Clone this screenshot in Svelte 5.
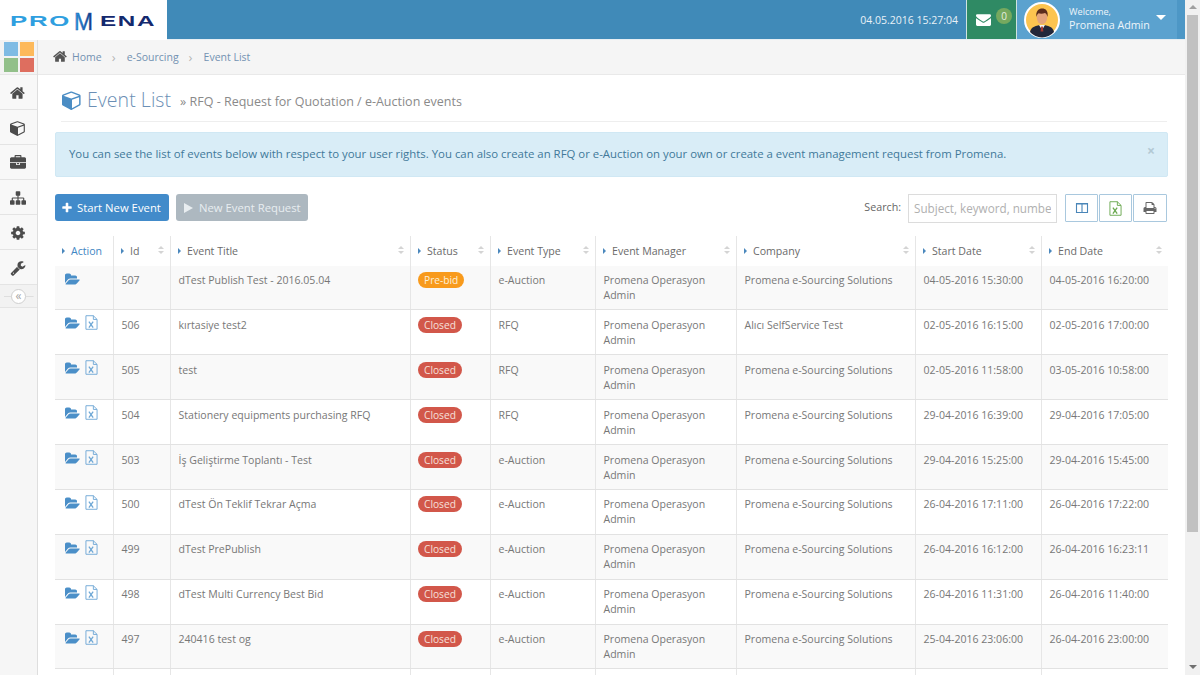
<script>
  const P = {
    home: "M1408 992v480q0 26-19 45t-45 19h-384v-384h-256v384h-384q-26 0-45-19t-19-45v-480q0-1 .5-3t.5-3l575-474 575 474q1 2 1 6zm223-69l-62 74q-8 9-21 11h-3q-13 0-21-7l-692-577-692 577q-12 8-24 7-13-2-21-11l-62-74q-8-10-7-23.5t11-21.5l719-599q32-26 76-26t76 26l244 204v-195q0-14 9-23t23-9h192q14 0 23 9t9 23v408l219 182q10 8 11 21.5t-7 23.5z",
    cube: "M896 1629l640-349v-636l-640 233v752zm-64-865l698-254-698-254-698 254zm832-252v768q0 35-18 65t-49 47l-704 384q-28 16-61 16t-61-16l-704-384q-31-17-49-47t-18-65v-768q0-40 23-73t61-47l704-256q22-8 44-8t44 8l704 256q38 14 61 47t23 73z",
    brief: "M640 256h512v-128h-512v128zm1152 640v480q0 66-47 113t-113 47h-1472q-66 0-113-47t-47-113v-480h672v160q0 26 19 45t45 19h320q26 0 45-19t19-45v-160h672zm-768 0v128h-256v-128h256zm768-480v384h-1792v-384q0-66 47-113t113-47h352v-160q0-40 28-68t68-28h576q40 0 68 28t28 68v160h352q66 0 113 47t47 113z",
    sitemap: "M1792 1248v320q0 40-28 68t-68 28h-320q-40 0-68-28t-28-68v-320q0-40 28-68t68-28h96v-192h-512v192h96q40 0 68 28t28 68v320q0 40-28 68t-68 28h-320q-40 0-68-28t-28-68v-320q0-40 28-68t68-28h96v-192h-512v192h96q40 0 68 28t28 68v320q0 40-28 68t-68 28h-320q-40 0-68-28t-28-68v-320q0-40 28-68t68-28h96v-192q0-52 38-90t90-38h512v-192h-96q-40 0-68-28t-28-68v-320q0-40 28-68t68-28h320q40 0 68 28t28 68v320q0 40-28 68t-68 28h-96v192h512q52 0 90 38t38 90v192h96q40 0 68 28t28 68z",
    cog: "M1152 896q0-106-75-181t-181-75-181 75-75 181 75 181 181 75 181-75 75-181zm512-109v222q0 12-8 23t-20 13l-185 28q-19 54-39 91 35 50 107 138 10 12 10 25t-9 23q-27 37-99 108t-94 71q-12 0-26-9l-138-108q-44 23-91 38-16 136-29 186-7 28-36 28h-222q-14 0-24.5-8.5t-11.5-21.5l-28-184q-49-16-90-37l-141 107q-10 9-25 9-14 0-25-11-126-114-165-168-7-10-7-23 0-12 8-23 15-21 51-66.5t54-70.5q-27-50-41-99l-183-27q-13-2-21-12.5t-8-23.5v-222q0-12 8-23t19-13l186-28q14-46 39-92-40-57-107-138-10-12-10-24 0-10 9-23 26-36 98.5-107.5t94.5-71.5q13 0 26 10l138 107q44-23 91-38 16-136 29-186 7-28 36-28h222q14 0 24.5 8.5t11.5 21.5l28 184q49 16 90 37l142-107q9-9 24-9 13 0 25 10 129 119 165 170 7 8 7 22 0 12-8 23-15 21-51 66.5t-54 70.5q26 50 41 98l183 28q13 2 21 12.5t8 23.5z",
    wrench: "M448 1472q0-26-19-45t-45-19-45 19-19 45 19 45 45 19 45-19 19-45zm644-420l-682 682q-37 37-90 37-52 0-91-37l-106-108q-38-36-38-90 0-53 38-91l681-681q39 98 114.5 173.5t173.5 114.5zm634-435q0 39-23 106-47 134-164.5 217.5t-258.5 83.5q-185 0-316.5-131.5t-131.5-316.5 131.5-316.5 316.5-131.5q58 0 121.5 16.5t107.5 46.5q16 11 16 28t-16 28l-293 169v224l193 107q5-3 79-48.5t135.5-81 70.5-35.5q15 0 23.5 10t8.5 25z",
    folder: "M1879 952q0 31-31 66l-336 396q-43 51-120.5 86.5t-143.5 35.5h-1088q-34 0-60.5-13t-26.5-43q0-31 31-66l336-396q43-51 120.5-86.5t143.5-35.5h1088q34 0 60.5 13t26.5 43zm-343-344v160h-832q-94 0-197 47.5t-164 119.5l-337 396-5 6q0-4-.5-12.5t-.5-12.5v-960q0-92 66-158t158-66h320q92 0 158 66t66 158v32h544q92 0 158 66t66 158z",
    mail: "M1792 710v794q0 66-47 113t-113 47h-1472q-66 0-113-47t-47-113v-794q44 49 101 87 362 246 497 345 57 42 92.5 65.5t94.5 48 110 24.5h2q51 0 110-24.5t94.5-48 92.5-65.5q170-123 498-345 57-39 100-87zm0-294q0 79-49 151t-122 123q-376 261-468 325-10 7-42.5 30.5t-54 38-52 32.5-57.5 27-50 9h-2q-23 0-50-9t-57.5-27-52-32.5-54-38-42.5-30.5q-91-64-262-182.5t-205-142.5q-62-42-117-115.5t-55-136.5q0-78 41.5-130t118.5-52h1472q65 0 112.5 45t47.5 109z",
    plus: "M1600 736v192q0 40-28 68t-68 28h-416v416q0 40-28 68t-68 28h-192q-40 0-68-28t-28-68v-416h-416q-40 0-68-28t-28-68v-192q0-40 28-68t68-28h416v-416q0-40 28-68t68-28h192q40 0 68 28t28 68v416h416q40 0 68 28t28 68z",
    print: "M448 1536h896v-256h-896v256zm0-640h896v-384h-160q-40 0-68-28t-28-68v-160h-640v640zm1152 64q0-26-19-45t-45-19-45 19-19 45 19 45 45 19 45-19 19-45zm128 0v416q0 13-9.5 22.5t-22.5 9.5h-224v160q0 40-28 68t-68 28h-960q-40 0-68-28t-28-68v-160h-224q-13 0-22.5-9.5t-9.5-22.5v-416q0-79 56.5-135.5t135.5-56.5h64v-544q0-40 28-68t68-28h672q40 0 88 20t76 48l152 152q28 28 48 76t20 88v256h64q79 0 135.5 56.5t56.5 135.5z"
  };
  const side = ['home','cube','brief','sitemap','cog','wrench'];
  const heads = ['Action','Id','Event Title','Status','Event Type','Event Manager','Company','Start Date','End Date'];
  const PES = 'Promena e-Sourcing Solutions';
  const rows = [
    ['507','dTest Publish Test - 2016.05.04','Pre-bid','e-Auction',PES,'04-05-2016 15:30:00','04-05-2016 16:20:00'],
    ['506','kırtasiye test2','Closed','RFQ','Alıcı SelfService Test','02-05-2016 16:15:00','02-05-2016 17:00:00'],
    ['505','test','Closed','RFQ',PES,'02-05-2016 11:58:00','03-05-2016 10:58:00'],
    ['504','Stationery equipments purchasing RFQ','Closed','RFQ',PES,'29-04-2016 16:39:00','29-04-2016 17:05:00'],
    ['503','İş Geliştirme Toplantı - Test','Closed','e-Auction',PES,'29-04-2016 15:25:00','29-04-2016 15:45:00'],
    ['500','dTest Ön Teklif Tekrar Açma','Closed','e-Auction',PES,'26-04-2016 17:11:00','26-04-2016 17:22:00'],
    ['499','dTest PrePublish','Closed','e-Auction',PES,'26-04-2016 16:12:00','26-04-2016 16:23:11'],
    ['498','dTest Multi Currency Best Bid','Closed','e-Auction',PES,'26-04-2016 11:31:00','26-04-2016 11:40:00'],
    ['497','240416 test og','Closed','e-Auction',PES,'25-04-2016 23:06:00','26-04-2016 23:00:00']
  ];
</script>

{#snippet fa(name, cls, vb = '0 0 1792 1792')}
  <svg class={cls} viewBox={vb} aria-hidden="true"><path d={P[name]} /></svg>
{/snippet}

{#snippet xl(cls)}
  <svg class={cls} viewBox="0 0 14 16" aria-hidden="true">
    <path d="M1 .7h8l4 4v10.600H1z M9 .7v4h4" fill="none" stroke="currentColor" stroke-width="1" />
    <path d="M4.200 7l4.600 6.500M8.800 7l-4.600 6.500" fill="none" stroke="currentColor" stroke-width="1.400" />
  </svg>
{/snippet}

<div class="page">
  <div class="app">
    <header class="top">
      <div class="logo">
        <svg viewBox="0 0 150 24" class="logosvg" role="img" aria-label="Promena">
          <defs>
            <linearGradient id="mg" x1="0" y1="0" x2="1" y2="0">
              <stop offset="0" stop-color="#2f9fe0" />
              <stop offset="0.45" stop-color="#1f6fc0" />
              <stop offset="1" stop-color="#14296e" />
            </linearGradient>
          </defs>
          <text x="0" y="18" class="lg lg1" textLength="61" lengthAdjust="spacingAndGlyphs">PRO</text>
          <text x="64" y="22" class="lg lg2" fill="url(#mg)" textLength="19" lengthAdjust="spacingAndGlyphs">M</text>
          <text x="90" y="18" class="lg lg3" textLength="56" lengthAdjust="spacingAndGlyphs">ENA</text>
        </svg>
      </div>
      <div class="bar">
        <span class="clock">04.05.2016 15:27:04</span>
        <div class="msg">
          {@render fa('mail', 'mailico')}
          <span class="count">0</span>
        </div>
        <div class="user">
          <svg class="avatar" viewBox="0 0 36 36" aria-hidden="true">
            <circle cx="18" cy="18" r="17" fill="#fcc44f" stroke="#fff" stroke-width="2" />
            <path d="M6 30c1-5 6-7 12-7s11 2 12 7a16 16 0 0 1-24 0z" fill="#23283a" />
            <path d="M15 23h6l-3 5z" fill="#f4f4f4" />
            <path d="M17.200 24.500h1.600l.6 5h-2.800z" fill="#a63a32" />
            <ellipse cx="18" cy="15.500" rx="5.200" ry="6.800" fill="#e3a47c" />
            <path d="M12.400 15c-1-6 2.500-8.500 5.800-8.500s6.500 2.500 5.300 8.500c-.5-2.500-1.500-3.500-2.500-4-2 .8-5 .8-6.500.2-1 .8-1.700 2-2.100 3.800z" fill="#5b2d1c" />
          </svg>
          <div class="who">
            <span class="welcome">Welcome,</span>
            <span class="name">Promena Admin</span>
          </div>
          <span class="caret"></span>
        </div>
      </div>
    </header>

    <div class="body">
      <aside class="side">
        <div class="tiles">
          <i class="t1"></i><i class="t2"></i><i class="t3"></i><i class="t4"></i>
        </div>
        {#each side as s}
          <div class="sitem">{@render fa(s, 'sico')}</div>
        {/each}
        <div class="collapse"><span class="cbtn">«</span></div>
      </aside>

      <main class="main">
        <nav class="crumb">
          {@render fa('home', 'cico')}
          <span class="cl">Home</span><span class="sep">›</span>
          <span class="cl">e-Sourcing</span><span class="sep">›</span>
          <span class="cl">Event List</span>
        </nav>

        <section class="content">
          <div class="title">
            {@render fa('cube', 'tico')}
            <h1>Event List</h1>
            <span class="sub">» RFQ - Request for Quotation / e-Auction events</span>
          </div>

          <div class="alert">
            <span>You can see the list of events below with respect to your user rights. You can also create an RFQ or e-Auction on your own or create a event management request from Promena.</span>
            <span class="close">×</span>
          </div>

          <div class="tools">
            <button class="btn blue">{@render fa('plus', 'bico')}Start New Event</button>
            <button class="btn grey"><span class="play"></span>New Event Request</button>
            <div class="right">
              <span class="slabel">Search:</span>
              <input class="search" placeholder="Subject, keyword, number" />
              <div class="tbtns">
                <button class="tb" aria-label="Columns">
                  <svg class="tbi" viewBox="0 0 14 14"><path d="M1.500 2.500h11v9h-11zM7 2.500v9M1.500 3h11" fill="none" stroke="#4a86b8" stroke-width="1.100" /></svg>
                </button>
                <button class="tb" aria-label="Excel">{@render xl('tbx')}</button>
                <button class="tb wide" aria-label="Print">{@render fa('print', 'tbp')}</button>
              </div>
            </div>
          </div>

          <div class="table">
            <div class="row thead">
              {#each heads as h, i}
                <div class="th" class:act={i === 0}>
                  <span class="tri"></span><span>{h}</span>
                  {#if i > 0}<span class="sort"><b></b><u></u></span>{/if}
                </div>
              {/each}
            </div>
            {#each rows as r, idx}
              <div class="row tr" class:odd={idx % 2 === 0}>
                <div class="td acts">
                  {@render fa('folder', 'fold', '0 0 1920 1792')}
                  {#if idx > 0}{@render xl('xls')}{/if}
                </div>
                <div class="td">{r[0]}</div>
                <div class="td">{r[1]}</div>
                <div class="td"><span class="badge" class:pre={r[2] === 'Pre-bid'}>{r[2]}</span></div>
                <div class="td">{r[3]}</div>
                <div class="td">Promena Operasyon Admin</div>
                <div class="td">{r[4]}</div>
                <div class="td">{r[5]}</div>
                <div class="td">{r[6]}</div>
              </div>
            {/each}
            <div class="row tr">
              {#each heads as h}<div class="td"></div>{/each}
            </div>
          </div>
        </section>
      </main>
    </div>
  </div>

  <div class="scroll">
    <span class="up"></span>
    <div class="thumb"></div>
    <span class="down"></span>
  </div>
</div>

<style>
  :global(body) { margin: 0; background: #fff; }
  :global(html, body) { overflow: hidden; }
  .page { display: flex; width: 1200px; height: 675px; overflow: hidden; font-family: "Open Sans", sans-serif; font-size: 11px; color: #777; }
  .app { width: 1185px; display: flex; flex-direction: column; }
  .top { height: 40px; display: flex; flex: none; }
  .logo { width: 167px; background: #fff; display: flex; align-items: center; padding-left: 10px; box-sizing: border-box; }
  .logosvg { width: 150px; height: 24px; overflow: visible; }
  .lg { font-family: "Liberation Sans", sans-serif; font-weight: 700; }
  .lg1 { font-size: 15px; fill: #2f9fe0; letter-spacing: 1px; }
  .lg2 { font-size: 24px; font-weight: 400; stroke: #1f5fb0; stroke-width: .4px; }
  .lg3 { font-size: 15px; fill: #14296e; letter-spacing: 1px; }
  .bar { flex: 1; background: #408ab8; display: flex; align-items: stretch; justify-content: flex-end; border-bottom: 1px solid #e6eef3; box-sizing: border-box; }
  .clock { align-self: center; color: #e8f1f7; font-size: 10.500px; margin-right: 8px; }
  .msg { width: 49px; background: #2f8a64; border-left: 1px solid #cfe3e0; border-right: 1px solid #cfe3e0; display: flex; align-items: center; position: relative; }
  .mailico { width: 15px; height: 15px; fill: #fff; margin-left: 9px; }
  .count { position: absolute; left: 29px; top: 8px; width: 16px; height: 16px; border-radius: 50%; background: #76a95f; color: #e6efe0; font-size: 10px; line-height: 16px; text-align: center; }
  .user { width: 168px; background: #5ba2cf; display: flex; align-items: center; padding-left: 7px; box-sizing: border-box; border-right: 8px solid #4d97c6; }
  .avatar { width: 36px; height: 36px; flex: none; }
  .who { display: flex; flex-direction: column; margin-left: 9px; margin-top: -2px; color: #eef5fa; line-height: 13px; }
  .welcome { font-size: 9.200px; }
  .name { font-size: 10.700px; margin-top: 1px; }
  .caret { width: 0; height: 0; border: 5px solid transparent; border-top-color: #fff; border-bottom: 0; margin-left: 6px; margin-top: -5px; }

  .body { flex: 1; display: flex; min-height: 0; }
  .side { width: 38px; flex: none; background: #f6f6f6; border-right: 1px solid #dedede; box-sizing: border-box; }
  .tiles { height: 35px; display: grid; grid-template-columns: 14px 14px; grid-template-rows: 14px 14px; gap: 2px; padding: 2px 0 0 4px; box-sizing: border-box; border-bottom: 1px solid #e6e6e6; background: #f3f3f3; align-content: start; }
  .tiles i { display: block; }
  .t1 { background: #7fbbe4; } .t2 { background: #fdb95b; } .t3 { background: #92c08a; } .t4 { background: #de6e5f; }
  .sitem { height: 35px; box-sizing: border-box; border-bottom: 1px solid #e4e4e4; display: flex; align-items: center; justify-content: center; padding-right: 1px; padding-top: 2px; background: #f8f8f8; }
  .sico { width: 16px; height: 16px; fill: #4c4c4c; }
  .collapse { height: 23px; box-sizing: border-box; display: flex; align-items: center; justify-content: center; background: linear-gradient(#dedede 0 0) center / 80% 1px no-repeat, #f2f2f2; border-bottom: 1px solid #e4e4e4; }
  .cbtn { width: 15px; height: 15px; line-height: 12px; border-radius: 50%; border: 1px solid #cfcfcf; background: #fff; color: #a5a5a5; text-align: center; font-size: 12px; box-sizing: border-box; }

  .main { flex: 1; min-width: 0; display: flex; flex-direction: column; }
  .crumb { height: 35px; flex: none; background: #f5f5f5; border-bottom: 1px solid #e9e9e9; box-sizing: border-box; display: flex; align-items: center; padding: 0 0 0 15px; }
  .cico { width: 15px; height: 15px; fill: #555; margin-right: 4px; margin-top: -2px; }
  .cl { color: #7392b2; font-size: 10.500px; }
  .sep { color: #b5b5b5; margin: 0 10px; font-size: 13px; width: 5px; }

  .content { padding: 0 17px; flex: 1; }
  .title { height: 47px; box-sizing: border-box; padding-top: 3px; display: flex; align-items: center; border-bottom: 1px solid #eee; margin-left: 6px; margin-right: 1px; }
  .tico { width: 20px; height: 20px; fill: #4b8dc4; margin-left: 1px; flex: none; }
  h1 { font-size: 19.500px; font-weight: 300; margin: 0 0 0 5px; color: #6b8fb5; letter-spacing: .05px; }
  .sub { font-size: 12.500px; margin-left: 9px; color: #8a8a8a; margin-top: 4px; }

  .alert { margin-top: 10px; height: 45px; background: #d9edf7; border-radius: 2px; display: flex; align-items: center; justify-content: space-between; padding: 0 12px 3px 13px; color: #41799a; font-size: 11.400px; border: 1px solid #d0e8f4; box-sizing: border-box; }
  .close { color: #b3c9d4; font-size: 14px; font-weight: 700; margin-top: -6px; }

  .tools { display: flex; align-items: flex-start; margin-top: 17px; height: 27px; }
  .btn { height: 27px; border: 0; border-radius: 3px; color: #fff; font: 11.300px "Open Sans", sans-serif; display: flex; align-items: center; padding: 0 7px; box-sizing: border-box; }
  .blue { background: #428bca; width: 114px; }
  .grey { background: #adb8c0; color: #e8edf0; margin-left: 7px; width: 132px; padding-left: 8px; }
  .bico { width: 12px; height: 12px; fill: #fff; margin: 0 4px 0 -1px; flex: none; }
  .play { width: 0; height: 0; border-left: 9px solid #e8edf0; border-top: 5.500px solid transparent; border-bottom: 5.500px solid transparent; margin-right: 6px; }
  .right { margin-left: auto; margin-right: 1px; display: flex; align-items: flex-start; }
  .slabel { margin: 6px 7px 0 0; font-size: 10.700px; color: #666; }
  .search { width: 149px; height: 29px; box-sizing: border-box; border: 1px solid #dcdcdc; padding: 0 5px 2px; font: 11.700px "Open Sans", sans-serif; background: #fff; outline: 0; }
  .search::placeholder { color: #b0b0b0; opacity: 1; }
  .tbtns { display: flex; gap: 1px; margin-left: 8px; }
  .tb { width: 33px; height: 28px; border: 1px solid #a9c8de; background: #fff; padding: 0; display: flex; align-items: center; justify-content: center; box-sizing: border-box; border-radius: 1px; }
  .tb.wide { width: 34px; }
  .tbi { width: 14px; height: 14px; }
  .tbx { width: 13px; height: 15px; color: #6aa84f; }
  .tbp { width: 14px; height: 14px; fill: #666; }

  .table { margin-top: 15px; width: 1113px; }
  .row { display: grid; grid-template-columns: 59px 57px 240px 80px 105px 141px 179px 126px 126px; }
  .thead { height: 29.500px; }
  .th { display: flex; align-items: center; padding: 0 0 0 7px; font-size: 10.600px; font-weight: 500; color: #6a6a6a; border-right: 1px solid #e6e6e6; position: relative; }
  .th:last-child { border-right: 0; }
  .th.act { color: #3f86c3; }
  .tri { width: 0; height: 0; border-left: 3px solid #4b88bd; border-top: 3px solid transparent; border-bottom: 3px solid transparent; margin-right: 6px; }
  .sort { position: absolute; right: 6px; top: 10px; display: flex; flex-direction: column; gap: 2px; }
  .sort b, .sort u { display: block; width: 0; height: 0; border-left: 3px solid transparent; border-right: 3px solid transparent; }
  .sort b { border-bottom: 3px solid #d4d4d4; }
  .sort u { border-top: 3px solid #d4d4d4; }
  .tr { height: 44.875px; border-bottom: 1px solid #e2e2e2; box-sizing: border-box; background: #fff; }
  .tr.odd { background: #f9f9f9; }
  .td { padding: 7.500px 7px 0 7.500px; font-size: 10.550px; line-height: 15px; border-right: 1px solid #e6e6e6; color: #777; min-width: 0; }
  .td:last-child { border-right: 0; }
  .acts { display: flex; align-items: flex-start; padding: 7px 0 0 10px; gap: 5px; }
  .fold { width: 15px; height: 15px; fill: #4b8fc8; flex: none; margin-top: -1px; }
  .xls { width: 13px; height: 15px; color: #6fa8d6; flex: none; margin-top: -2px; }
  .badge { display: block; width: fit-content; height: 16px; line-height: 16px; padding: 0 6px; margin: -1px 0 0 -.5px; border-radius: 8px; background: #d2574a; color: #f6e0dc; font-size: 10.200px; }
  .badge.pre { background: #f89a1c; color: #fdf0d8; }

  .scroll { width: 15px; flex: none; background: #f1f1f1; position: relative; }
  .up { display: block; width: 0; height: 0; margin: 5px auto 0; border: 4px solid transparent; border-bottom-color: #a0a0a0; border-top: 0; }
  .down { position: absolute; bottom: 6px; left: 4px; width: 0; height: 0; border: 4px solid transparent; border-top-color: #707070; border-bottom: 0; }
  .thumb { position: absolute; left: 2px; right: 2px; top: 15px; height: 517px; background: #c1c1c1; }
</style>
